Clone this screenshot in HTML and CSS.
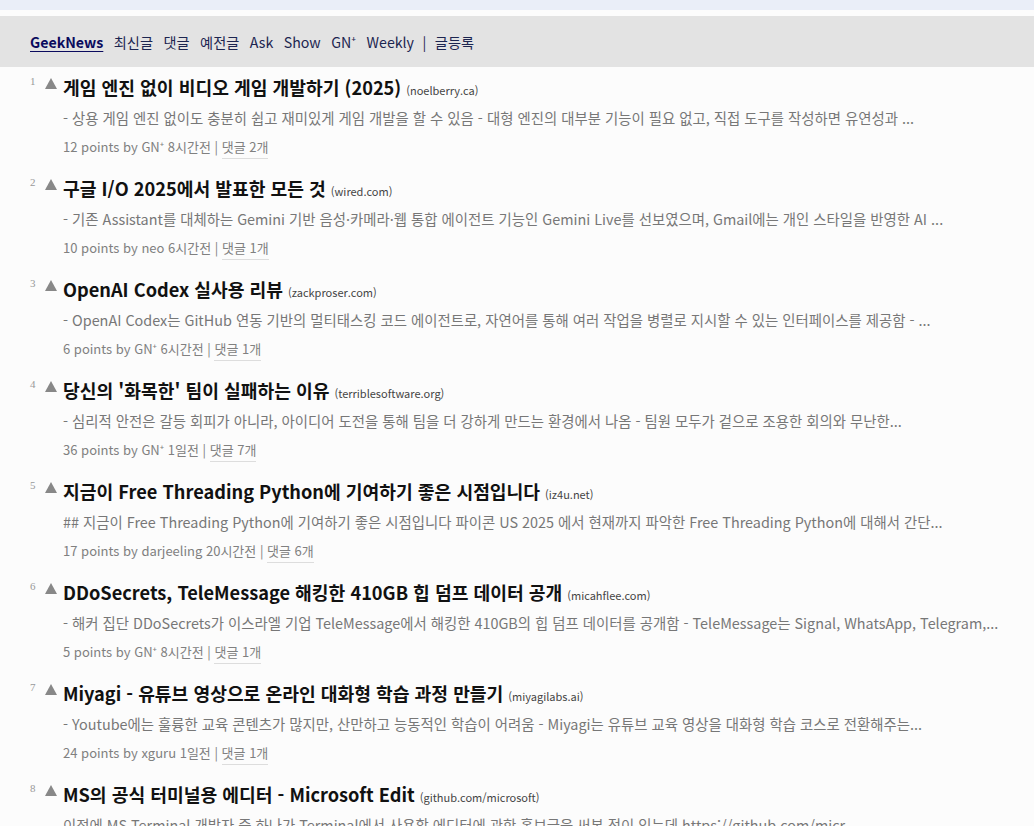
FILE: index.html
```html
<!DOCTYPE html>
<html lang="ko">
<head>
<meta charset="utf-8">
<title>GeekNews</title>
<link rel="stylesheet" href="styles.css">
</head>
<body>
<div class="topstrip"></div>
<header class="nav">
  <a class="brand">GeekNews</a>
  <a>최신글</a>
  <a>댓글</a>
  <a>예전글</a>
  <a>Ask</a>
  <a>Show</a>
  <a>GN⁺</a>
  <a>Weekly</a>
  <span class="sep">|</span>
  <a>글등록</a>
</header>
<main class="list">
  <article class="item">
    <div class="row"><span class="rank">1</span><span class="vote"></span><a class="title">게임 엔진 없이 비디오 게임 개발하기 (2025)</a><span class="domain">(noelberry.ca)</span></div>
    <p class="desc">- 상용 게임 엔진 없이도 충분히 쉽고 재미있게 게임 개발을 할 수 있음 - 대형 엔진의 대부분 기능이 필요 없고, 직접 도구를 작성하면 유연성과 ...</p>
    <div class="meta">12 points by GN⁺ 8시간전 | <a class="cmt">댓글 2개</a></div>
  </article>
  <article class="item">
    <div class="row"><span class="rank">2</span><span class="vote"></span><a class="title">구글 I/O 2025에서 발표한 모든 것</a><span class="domain">(wired.com)</span></div>
    <p class="desc">- 기존 Assistant를 대체하는 Gemini 기반 음성·카메라·웹 통합 에이전트 기능인 Gemini Live를 선보였으며, Gmail에는 개인 스타일을 반영한 AI ...</p>
    <div class="meta">10 points by neo 6시간전 | <a class="cmt">댓글 1개</a></div>
  </article>
  <article class="item">
    <div class="row"><span class="rank">3</span><span class="vote"></span><a class="title">OpenAI Codex 실사용 리뷰</a><span class="domain">(zackproser.com)</span></div>
    <p class="desc">- OpenAI Codex는 GitHub 연동 기반의 멀티태스킹 코드 에이전트로, 자연어를 통해 여러 작업을 병렬로 지시할 수 있는 인터페이스를 제공함 - ...</p>
    <div class="meta">6 points by GN⁺ 6시간전 | <a class="cmt">댓글 1개</a></div>
  </article>
  <article class="item">
    <div class="row"><span class="rank">4</span><span class="vote"></span><a class="title">당신의 '화목한' 팀이 실패하는 이유</a><span class="domain">(terriblesoftware.org)</span></div>
    <p class="desc">- 심리적 안전은 갈등 회피가 아니라, 아이디어 도전을 통해 팀을 더 강하게 만드는 환경에서 나옴 - 팀원 모두가 겉으로 조용한 회의와 무난한...</p>
    <div class="meta">36 points by GN⁺ 1일전 | <a class="cmt">댓글 7개</a></div>
  </article>
  <article class="item">
    <div class="row"><span class="rank">5</span><span class="vote"></span><a class="title">지금이 Free Threading Python에 기여하기 좋은 시점입니다</a><span class="domain">(iz4u.net)</span></div>
    <p class="desc">## 지금이 Free Threading Python에 기여하기 좋은 시점입니다 파이콘 US 2025 에서 현재까지 파악한 Free Threading Python에 대해서 간단...</p>
    <div class="meta">17 points by darjeeling 20시간전 | <a class="cmt">댓글 6개</a></div>
  </article>
  <article class="item">
    <div class="row"><span class="rank">6</span><span class="vote"></span><a class="title">DDoSecrets, TeleMessage 해킹한 410GB 힙 덤프 데이터 공개</a><span class="domain">(micahflee.com)</span></div>
    <p class="desc">- 해커 집단 DDoSecrets가 이스라엘 기업 TeleMessage에서 해킹한 410GB의 힙 덤프 데이터를 공개함 - TeleMessage는 Signal, WhatsApp, Telegram,...</p>
    <div class="meta">5 points by GN⁺ 8시간전 | <a class="cmt">댓글 1개</a></div>
  </article>
  <article class="item">
    <div class="row"><span class="rank">7</span><span class="vote"></span><a class="title">Miyagi - 유튜브 영상으로 온라인 대화형 학습 과정 만들기</a><span class="domain">(miyagilabs.ai)</span></div>
    <p class="desc">- Youtube에는 훌륭한 교육 콘텐츠가 많지만, 산만하고 능동적인 학습이 어려움 - Miyagi는 유튜브 교육 영상을 대화형 학습 코스로 전환해주는...</p>
    <div class="meta">24 points by xguru 1일전 | <a class="cmt">댓글 1개</a></div>
  </article>
  <article class="item">
    <div class="row"><span class="rank">8</span><span class="vote"></span><a class="title">MS의 공식 터미널용 에디터 - Microsoft Edit</a><span class="domain">(github.com/microsoft)</span></div>
    <p class="desc">이전에 MS Terminal 개발자 중 하나가 Terminal에서 사용할 에디터에 관한 홍보글을 써본 적이 있는데 https://github.com/micr...</p>
    <div class="meta">8 points by neo 1일전 | <a class="cmt">댓글 1개</a></div>
  </article>
</main>
</body>
</html>
```

FILE: styles.css
```css
html, body {
  margin: 0;
  padding: 0;
}
body {
  background: #fcfcfc;
  font-family: "Noto Sans CJK KR", "Noto Sans", sans-serif;
  color: #111;
}
a {
  color: inherit;
  text-decoration: none;
}
.topstrip {
  height: 10px;
  background: #eaeef8;
  margin-bottom: 6px;
}
.nav {
  height: 51px;
  background: #e3e3e3;
  display: flex;
  align-items: center;
  padding-left: 30px;
  gap: 10.5px;
  font-size: 14.2px;
  color: #1c2550;
}
.nav .brand {
  font-weight: 700;
  color: #0b0b5e;
  text-decoration: underline;
  text-underline-offset: 3px;
  text-decoration-thickness: 1px;
}
.nav .sep {
  margin: 0 -2px;
}
.list {
  padding: 7px 0 0 30px;
}
.item {
  height: 101px;
}
.row {
  display: flex;
  align-items: baseline;
  height: 22px;
}
.rank {
  font-family: "Liberation Serif", serif;
  font-size: 11px;
  color: #999;
  width: 10px;
  align-self: flex-start;
  margin-top: 1px;
}
.vote {
  width: 0;
  height: 0;
  border-left: 6px solid transparent;
  border-right: 6px solid transparent;
  border-bottom: 11px solid #888;
  margin: 0 6px 0 5px;
  align-self: flex-start;
  margin-top: 4px;
}
.title {
  font-size: 18.2px;
  font-weight: 700;
  color: #111;
}
.domain {
  font-size: 11px;
  color: #444;
  margin-left: 5px;
}
.desc {
  margin: 12px 0 0 33px;
  font-size: 14.4px;
  color: #777;
  line-height: 20px;
  white-space: nowrap;
}
.meta {
  margin: 10px 0 0 33px;
  font-size: 13px;
  color: #808080;
  line-height: 18px;
}
.meta .cmt {
  border-bottom: 1px solid #ddd;
  padding-bottom: 2px;
}
```
